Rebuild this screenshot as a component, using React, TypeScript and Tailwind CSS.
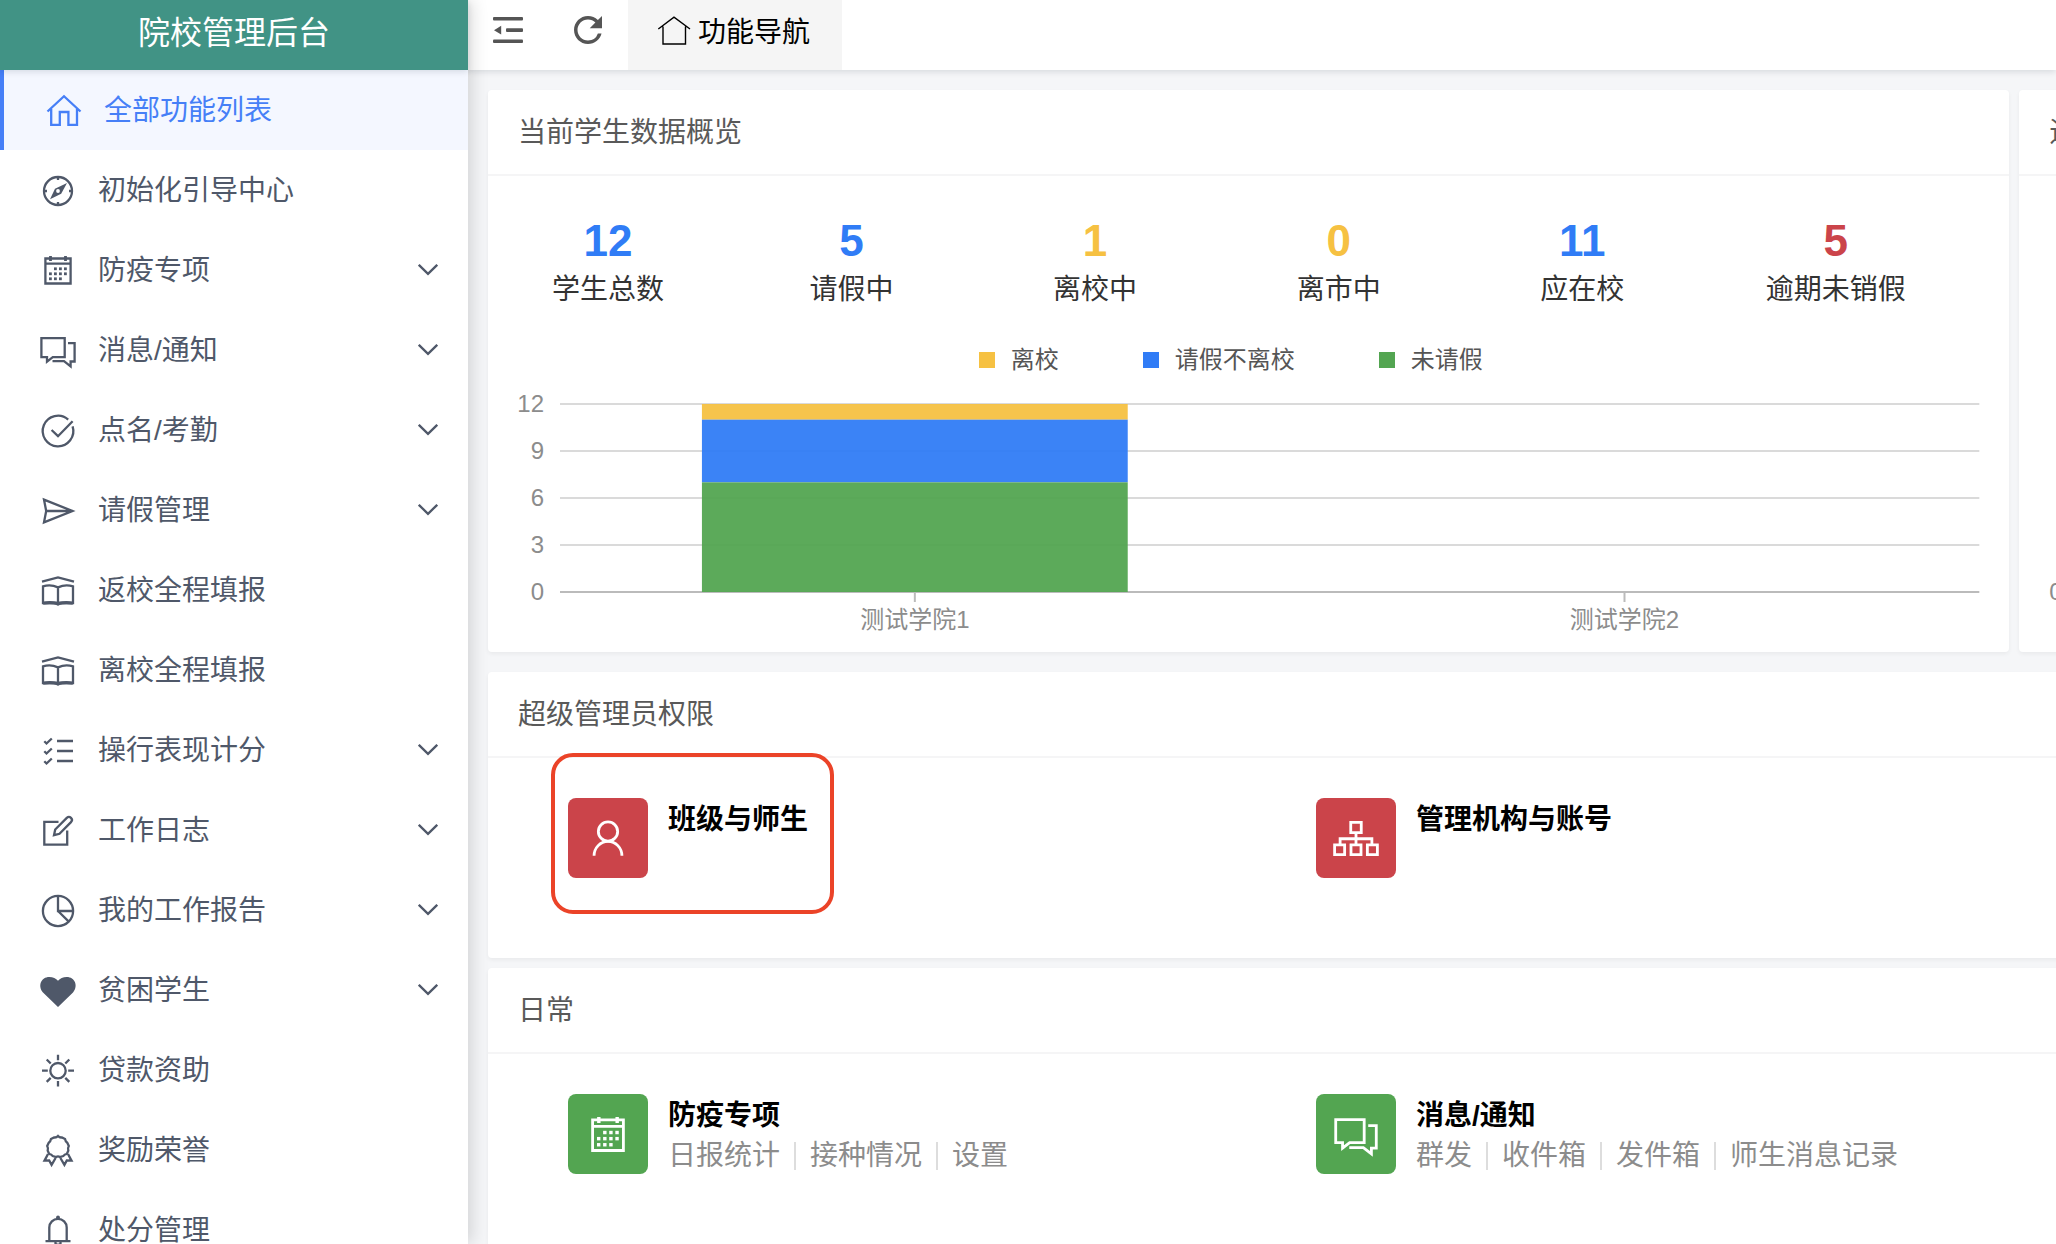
import React from 'react';
import { MdRefresh } from 'react-icons/md';

type IconName =
  | 'home'
  | 'compass'
  | 'calendar'
  | 'chat'
  | 'check'
  | 'send'
  | 'book'
  | 'list'
  | 'edit'
  | 'pie'
  | 'heart'
  | 'sun'
  | 'award'
  | 'bell'
  | 'user'
  | 'org';

const CALENDAR_DOTS = [
  [15.3, 16.7], [20.3, 16.7], [25.3, 16.7],
  [10.3, 21.7], [15.3, 21.7], [20.3, 21.7], [25.3, 21.7],
  [10.3, 26.7], [15.3, 26.7], [20.3, 26.7],
];

const ICONS: Record<IconName, React.ReactNode> = {
  home: <path d="M1.5 19.5 18 4.2l16.5 15.3M5.2 17v15.8h8.6V20h8.6v12.8h8.6V17" />,
  compass: (
    <>
      <circle cx="18" cy="19" r="14" />
      <path d="M18 5v3M18 30v3M4 19h3M29 19h3" />
      <path d="m27 11-5.8 10.8L10 27.2l5-10.4z" fill="currentColor" stroke="none" />
      <circle cx="18" cy="19" r="1.9" fill="#fff" stroke="none" />
    </>
  ),
  calendar: (
    <>
      <path d="M5.4 6.5h25.2v25H5.4zM5.4 11.7h25.2" />
      <path d="M10.5 4v5M25.5 4v5" strokeWidth="2.8" />
      {CALENDAR_DOTS.map(([x, y]) => (
        <rect key={`${x}-${y}`} x={x - 1.3} y={y - 1.3} width="2.8" height="2.8" fill="currentColor" stroke="none" />
      ))}
    </>
  ),
  chat: <path d="M1.4 6.2h23.3v18.9H12.8L7 29.6v-4.5H1.4zM28 11.2h6.6v18.3h-4v4.8L24 29.2H12.5" />,
  check: <path d="M28.2 7.6A15.3 15.3 0 1 0 32.6 14.4M11.6 18 18 24.2 32.6 9.2" />,
  send: <path d="m4 7.6 28.5 11.4L4 30.4 6.2 19zM6.2 19H33" />,
  book: (
    <>
      <path d="M2 9.6 18 5.4l16 4.2M3 14.4q7.5-2.6 15 1 7.5-3.6 15-1V31H3zM18 15.4v18.1" />
      <path d="M3 31.2q7.500-1.500 15 .4 7.500-1.900 15-.4" strokeWidth="3.2" />
    </>
  ),
  list: (
    <path d="M17 9h16M17 19h16M17 29h16M4.3 9.3l2.2 2.2 5.3-5M4.3 19.3l2.2 2.2 5.3-5M4.3 29.3l2.2 2.2 5.3-5" />
  ),
  edit: (
    <path d="M18.5 9.8H4.3v22.9h22.9V18.5M14 23.2l1.2-5.7L26.8 5.9a2.9 2.9 0 0 1 4.2 4.2L19.5 21.8z" />
  ),
  pie: (
    <>
      <circle cx="18" cy="19" r="15.1" />
      <path d="M18 4v15h15.3M18 19l10.8 10.6" />
    </>
  ),
  heart: (
    <path
      d="M18 35 3 20.5C-2.5 14 1 5 9.3 5c3.7 0 6.7 1.4 8.700 3.800C20 6.400 23 5 26.700 5 35 5 38.500 14 33 20.500z"
      fill="currentColor"
      stroke="none"
    />
  ),
  sun: (
    <>
      <circle cx="18" cy="18.7" r="7.7" />
      <path d="M18 2.7v5.6M18 29v5.6M2 18.7h5.8M28.2 18.7H34M6.7 7.5l4 4M25.3 11.5l4-4M6.7 29.9l4-4M25.3 25.9l4 4" />
    </>
  ),
  award: (
    <>
      <path d="M18 4q1.7 1.9 4 1.4l3 1.5q.3 2.5 2.3 3.8l1.5 3.3q-1.3 2.2-.5 4.6l-1.4 3.2q-2.4.4-3.7 2.3l-3.4.9q-1.8-1.2-3.6 0l-3.4-.9q-1.3-1.9-3.7-2.3l-1.4-3.2q.8-2.4-.5-4.6l1.5-3.3q2-1.3 2.3-3.8l3-1.5q2.3.5 4-1.4z" />
      <path d="m8 22-3.500 6.600 4.700-.2 2.400 4.400 4-6.800M28 22l3.500 6.600-4.700-.2-2.400 4.400-4-6.800" />
    </>
  ),
  bell: (
    <>
      <path d="M9.3 29V15.5a8.7 8.7 0 0 1 17.4 0V29M5.500 29.200h25M15.500 29.500v2.300q2.500 2 5 0v-2.300" />
      <circle cx="18" cy="5.3" r="1.9" fill="currentColor" stroke="none" />
    </>
  ),
  user: (
    <>
      <circle cx="18" cy="12.7" r="7.9" />
      <path d="M6.6 32.6a11.4 11.8 0 0 1 22.8 0" />
    </>
  ),
  org: (
    <path d="M13.7 5.200h8.600v8.400h-8.600zM18 13.600v9.600M5 23.200v-4.600h26v4.600M.5 23.600h8.200v8H.5zM13.900 23.600h8.200v8h-8.200zM27.300 23.600h8.200v8h-8.200z" />
  ),
};

const Icon: React.FC<{ name: IconName; className?: string }> = ({ name, className = 'size-9' }) => (
  <svg
    viewBox="0 0 36 36"
    className={`shrink-0 overflow-visible ${className}`}
    fill="none"
    stroke="currentColor"
    strokeWidth="2.3"
    aria-hidden="true"
  >
    {ICONS[name]}
  </svg>
);

interface MenuItem {
  label: string;
  icon: IconName;
  expandable?: boolean;
}

const MENU: MenuItem[] = [
  { label: '初始化引导中心', icon: 'compass' },
  { label: '防疫专项', icon: 'calendar', expandable: true },
  { label: '消息/通知', icon: 'chat', expandable: true },
  { label: '点名/考勤', icon: 'check', expandable: true },
  { label: '请假管理', icon: 'send', expandable: true },
  { label: '返校全程填报', icon: 'book' },
  { label: '离校全程填报', icon: 'book' },
  { label: '操行表现计分', icon: 'list', expandable: true },
  { label: '工作日志', icon: 'edit', expandable: true },
  { label: '我的工作报告', icon: 'pie', expandable: true },
  { label: '贫困学生', icon: 'heart', expandable: true },
  { label: '贷款资助', icon: 'sun' },
  { label: '奖励荣誉', icon: 'award' },
  { label: '处分管理', icon: 'bell' },
];

const Sidebar = () => (
  <aside className="relative z-20 flex w-[468px] shrink-0 flex-col bg-white shadow-[4px_0_16px_rgba(0,0,0,0.14)]">
    <h1 className="relative z-10 flex h-[70px] shrink-0 items-center justify-center bg-[#419385] pb-1 text-[32px] text-white shadow-[0_2px_6px_rgba(0,21,41,0.12)]">
      院校管理后台
    </h1>
    <nav className="min-h-0 flex-1 overflow-hidden text-[28px] text-[#4f5869]">
      <a
        href="#all"
        aria-current="page"
        className="flex h-20 items-center gap-[22px] border-l-4 border-[#467ff7] bg-[#f4f7ff] pl-[42px] text-[#467ff7]"
      >
        <Icon name="home" />
        <span className="pt-0.5">全部功能列表</span>
      </a>
      {MENU.map(({ label, icon, expandable }) =>
        expandable ? (
          <button key={label} type="button" aria-expanded="false" className="flex h-20 w-full items-center gap-[22px] pl-10 pr-[30px]">
            <Icon name={icon} />
            <span className="pt-0.5">{label}</span>
            <svg viewBox="0 0 20 12" className="ml-auto h-3 w-5" fill="none" stroke="currentColor" strokeWidth="2.3" aria-hidden="true">
              <path d="m.8.8 9.2 9 9.2-9" />
            </svg>
          </button>
        ) : (
          <a key={label} href={`#${icon}`} className="flex h-20 items-center gap-[22px] pl-10">
            <Icon name={icon} />
            <span className="pt-0.5">{label}</span>
          </a>
        )
      )}
    </nav>
  </aside>
);

const Toolbar = () => (
  <header className="relative z-10 flex h-[70px] shrink-0 bg-white text-[#555] shadow-[0_2px_6px_rgba(0,21,41,0.12)]">
    <button type="button" aria-label="收起菜单" className="flex w-20 items-center justify-center pb-2.5">
      <svg viewBox="0 0 30 28" className="h-7 w-[30px]" fill="currentColor" aria-hidden="true">
        <rect y="1" width="30" height="3.6" rx="1" />
        <rect x="13" y="12.3" width="17" height="3.6" rx="1" />
        <rect y="23.5" width="30" height="3.6" rx="1" />
        <path d="m1 14.200 7.200-4.400v8.800z" />
      </svg>
    </button>
    <button type="button" aria-label="刷新" className="flex w-20 items-center justify-center pb-2.5">
      <MdRefresh className="size-[42px]" />
    </button>
    <a href="#nav" className="flex items-center gap-1.5 bg-[#f5f5f5] pb-1.5 pl-7 pr-8 text-[28px] text-black">
      <svg viewBox="0 0 36 36" className="size-9" fill="none" stroke="currentColor" strokeWidth="1.4" aria-hidden="true">
        <path d="M2.300 15 18 3.200 34 15M7 12.500V30h22.500V12.500" />
      </svg>
      <span className="pt-0.5">功能导航</span>
    </a>
  </header>
);

const Card: React.FC<{ title: string; className?: string; children?: React.ReactNode }> = ({
  title,
  className = '',
  children,
}) => (
  <section className={`overflow-hidden rounded bg-white shadow-[0_2px_4px_rgba(0,0,0,0.05)] ${className}`}>
    <h2 className="border-b-2 border-[#f5f5f6] px-[30px] pt-0.5 text-[28px] leading-[82px] text-[#595959]">{title}</h2>
    {children}
  </section>
);

const STATS = [
  { value: 12, label: '学生总数', color: 'text-[#307cf6]' },
  { value: 5, label: '请假中', color: 'text-[#307cf6]' },
  { value: 1, label: '离校中', color: 'text-[#f6c142]' },
  { value: 0, label: '离市中', color: 'text-[#f6c142]' },
  { value: 11, label: '应在校', color: 'text-[#307cf6]' },
  { value: 5, label: '逾期未销假', color: 'text-[#cb444a]' },
];

const LEGEND = [
  { label: '离校', color: 'bg-[#f6c142]' },
  { label: '请假不离校', color: 'bg-[#307cf6]' },
  { label: '未请假', color: 'bg-[#53a551]' },
];

const MAX = 12;
const PLOT_HEIGHT = 188;
const TICKS = [12, 9, 6, 3, 0];
const COLLEGES = ['测试学院1', '测试学院2'];
const SEGMENTS = [
  { from: 11, to: 12, color: '#f6c142' },
  { from: 7, to: 11, color: '#307cf6' },
  { from: 0, to: 7, color: '#53a551' },
];

const yOf = (value: number) => 6 + (1 - value / MAX) * PLOT_HEIGHT;

const StackChart = () => (
  <div className="pl-[42px]">
    <svg className="block h-[254px] w-full overflow-visible" role="img" aria-label="各学院请假情况" fontSize="24" fill="#8c8c8c">
      {TICKS.map((tick) => (
        <React.Fragment key={tick}>
          <line x1="0" x2="100%" y1={yOf(tick)} y2={yOf(tick)} stroke={tick === 0 ? '#bbb' : '#dadada'} strokeWidth="2" />
          <text x="-16" y={yOf(tick) + 8} textAnchor="end">
            {tick}
          </text>
        </React.Fragment>
      ))}
      {SEGMENTS.map(({ from, to, color }) => (
        <rect key={color} x="10%" width="30%" y={yOf(to)} height={yOf(from) - yOf(to)} fill={color} fillOpacity="0.95" />
      ))}
      {COLLEGES.map((name, i) => {
        const x = `${25 + i * 50}%`;
        return (
          <React.Fragment key={name}>
            <line x1={x} x2={x} y1={yOf(0)} y2={yOf(0) + 10} stroke="#bbb" strokeWidth="2" />
            <text x={x} y={yOf(0) + 36} textAnchor="middle">
              {name}
            </text>
          </React.Fragment>
        );
      })}
    </svg>
  </div>
);

const Overview = () => (
  <Card title="当前学生数据概览">
    <div className="px-[30px] pt-10">
      <dl className="grid grid-cols-6">
        {STATS.map(({ value, label, color }) => (
          <div key={label} className="flex min-w-[180px] flex-col-reverse justify-self-start px-[30px] text-center">
            <dt className="text-[28px] leading-[48px] text-[#333]">{label}</dt>
            <dd className={`text-[44px] leading-[50px] font-bold ${color}`}>{value}</dd>
          </div>
        ))}
      </dl>
      <ul className="mt-7 mb-5 flex justify-center gap-[84px] pr-9 text-[24px] leading-9 text-[#555]">
        {LEGEND.map(({ label, color }) => (
          <li key={label} className="flex items-center gap-4">
            <span className={`size-4 ${color}`} />
            {label}
          </li>
        ))}
      </ul>
      <StackChart />
    </div>
  </Card>
);

interface TileProps {
  icon: IconName;
  title: string;
  color: string;
  links?: string[];
  marked?: boolean;
}

const Tile: React.FC<TileProps> = ({ icon, title, color, links = [], marked }) => (
  <div className="relative flex gap-5 pl-14">
    <a href={`#${icon}`} aria-label={title} className={`flex size-20 shrink-0 items-center justify-center rounded-lg text-white ${color}`}>
      <Icon name={icon} className="size-11" />
    </a>
    <div className="pt-0.5 text-[28px] leading-10">
      <h3 className="font-bold text-black">{title}</h3>
      <div className="flex items-center text-[#8c8c8c]">
        {links.map((link, i) => (
          <React.Fragment key={link}>
            {i > 0 && <span className="mx-3.5 h-7 w-0.5 bg-[#ddd]" />}
            <a href={`#${icon}-${i}`}>{link}</a>
          </React.Fragment>
        ))}
      </div>
    </div>
    {marked && (
      <span className="pointer-events-none absolute -top-[45px] left-[39px] h-[161px] w-[283px] rounded-[22px] border-4 border-[#eb4328]" />
    )}
  </div>
);

const App = () => (
  <div className="flex h-screen overflow-hidden bg-[#f5f6f8] font-['Liberation_Sans','Noto_Sans_CJK_SC',sans-serif]">
    <Sidebar />
    <div className="flex min-w-0 flex-1 flex-col">
      <Toolbar />
      <main className="min-h-0 flex-1 overflow-hidden">
        {/* the dashboard is wider than the viewport and gets clipped on the right */}
        <div className="min-w-[2332px] p-5">
          <div className="grid grid-cols-[2fr_1fr] gap-2.5">
            <Overview />
            <Card title="逾期未销假" className="flex flex-col">
              <p className="mt-auto px-[30px] pb-[46px] text-[24px] leading-7 text-[#8c8c8c]">0</p>
            </Card>
          </div>
          <Card title="超级管理员权限" className="mt-5">
            <div className="grid h-[200px] grid-cols-3 px-6 pt-10">
              <Tile icon="user" title="班级与师生" color="bg-[#cb444a]" marked />
              <Tile icon="org" title="管理机构与账号" color="bg-[#cb444a]" />
            </div>
          </Card>
          <Card title="日常" className="mt-2.5">
            <div className="grid h-[200px] grid-cols-3 px-6 pt-10">
              <Tile icon="calendar" title="防疫专项" color="bg-[#53a551]" links={['日报统计', '接种情况', '设置']} />
              <Tile icon="chat" title="消息/通知" color="bg-[#53a551]" links={['群发', '收件箱', '发件箱', '师生消息记录']} />
            </div>
          </Card>
        </div>
      </main>
    </div>
  </div>
);

export default App;
